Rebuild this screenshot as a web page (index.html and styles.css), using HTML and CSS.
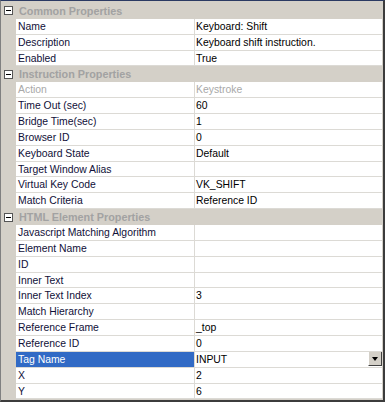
FILE: index.html
```html
<!DOCTYPE html>
<html lang="en">
<head>
<meta charset="utf-8">
<title>Properties</title>
<link rel="stylesheet" href="styles.css">
</head>
<body>
<div class="pg">
<div class="grid">
<div class="cat"><span class="tog"></span>Common Properties</div>
<div class="row"><div class="k">Name</div><div class="v">Keyboard: Shift</div></div>
<div class="row"><div class="k">Description</div><div class="v">Keyboard shift instruction.</div></div>
<div class="row"><div class="k">Enabled</div><div class="v">True</div></div>
<div class="cat"><span class="tog"></span>Instruction Properties</div>
<div class="row off"><div class="k">Action</div><div class="v">Keystroke</div></div>
<div class="row"><div class="k">Time Out (sec)</div><div class="v">60</div></div>
<div class="row"><div class="k">Bridge Time(sec)</div><div class="v">1</div></div>
<div class="row"><div class="k">Browser ID</div><div class="v">0</div></div>
<div class="row"><div class="k">Keyboard State</div><div class="v">Default</div></div>
<div class="row"><div class="k">Target Window Alias</div><div class="v"></div></div>
<div class="row"><div class="k">Virtual Key Code</div><div class="v">VK_SHIFT</div></div>
<div class="row"><div class="k">Match Criteria</div><div class="v">Reference ID</div></div>
<div class="cat"><span class="tog"></span>HTML Element Properties</div>
<div class="row"><div class="k">Javascript Matching Algorithm</div><div class="v"></div></div>
<div class="row"><div class="k">Element Name</div><div class="v"></div></div>
<div class="row"><div class="k">ID</div><div class="v"></div></div>
<div class="row"><div class="k">Inner Text</div><div class="v"></div></div>
<div class="row"><div class="k">Inner Text Index</div><div class="v">3</div></div>
<div class="row"><div class="k">Match Hierarchy</div><div class="v"></div></div>
<div class="row"><div class="k">Reference Frame</div><div class="v">_top</div></div>
<div class="row"><div class="k">Reference ID</div><div class="v">0</div></div>
<div class="row sel"><div class="k">Tag Name</div><div class="v">INPUT<span class="dd"></span></div></div>
<div class="row"><div class="k">X</div><div class="v">2</div></div>
<div class="row"><div class="k">Y</div><div class="v">6</div></div>
</div>
</div>
</body>
</html>
```

FILE: styles.css
```css
*{box-sizing:border-box;}
body{margin:0;background:#fff;font-family:'Liberation Sans',Arial,sans-serif;font-size:10.4px;}
.pg{width:385px;height:402px;border-top:1px solid #2b3a63;border-left:1px solid #808080;border-right:2px solid #3c3c3c;border-bottom:2px solid #3c3c3c;background:#d4d0c8;}
.grid{padding-top:2px;padding-right:1px;}
.cat{height:15.86px;display:flex;align-items:center;padding-left:3px;font-weight:bold;font-size:10.8px;color:#a2a2a2;gap:6px;}
.tog{width:9px;height:9px;border:1px solid #555;background:#fff;position:relative;flex:none;}
.tog::after{content:"";position:absolute;left:1px;top:3px;width:5px;height:1px;background:#000;}
.row{height:15.86px;display:flex;margin-left:15px;background:#fff;}
.k,.v{border-bottom:1px solid #dcdad5;line-height:15px;white-space:nowrap;overflow:hidden;color:#101038;}
.k{width:179px;flex:none;border-right:1px solid #dcdad5;padding-left:2px;}
.v{flex:1;padding-left:1px;color:#000;display:flex;align-items:flex-start;}
.off .k,.off .v{color:#a8a8a8;}
.sel .k{background:#316ac5;color:#fff;}
.dd{margin-left:auto;width:14px;height:15px;margin-top:-1px;background:#d4d0c8;border:1px solid;border-color:#fff #404040 #404040 #fff;position:relative;}
.dd::after{content:"";position:absolute;left:3px;top:5px;border-left:3.5px solid transparent;border-right:3.5px solid transparent;border-top:4px solid #000;}
```
